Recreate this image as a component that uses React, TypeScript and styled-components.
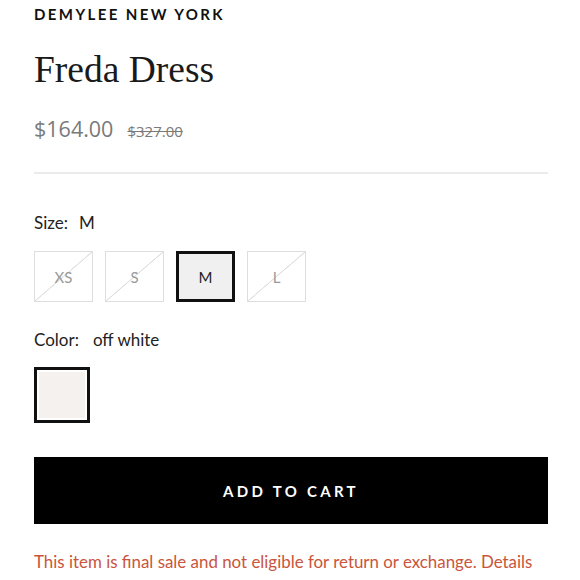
import React from "react";
import styled, {createGlobalStyle} from "styled-components";

const Global = createGlobalStyle`
  body {
    margin: 0;
    background: #fff;
    font-family: Lato, "Open Sans", sans-serif;
  }
`;

const Page = styled.main`
  width: 580px;
  box-sizing: border-box;
  padding: 4px 33px 0 34px;
  display: flex;
  flex-direction: column;
`;

const Brand = styled.div`
  font-family: Lato, sans-serif;
  font-weight: 700;
  font-size: 15px;
  letter-spacing: 2.4px;
  color: #111;
  line-height: 20px;
`;

const Title = styled.h1`
  font-family: "Liberation Serif", "DejaVu Serif", serif;
  font-weight: 400;
  font-size: 37.5px;
  color: #1a1a1a;
  margin: 25px 0 0;
  line-height: 42px;
`;

const Prices = styled.div`
  display: flex;
  align-items: baseline;
  gap: 14px;
  margin-top: 23px;
`;

const Price = styled.span`
  font-family: "Open Sans", sans-serif;
  font-size: 21.5px;
  color: #7a7a7a;
`;

const OldPrice = styled.s`
  font-family: "Open Sans", sans-serif;
  font-size: 15px;
  color: #7a7a7a;
`;

const Divider = styled.hr`
  border: none;
  height: 2px;
  background: #ebebeb;
  margin: 29px 0 0;
  width: 514px;
`;

const Label = styled.div<{$top: number; $gap: number}>`
  font-size: 17px;
  color: #222;
  margin-top: ${p => p.$top}px;
  display: flex;
  gap: ${p => p.$gap}px;
`;

const Sizes = styled.div`
  display: flex;
  gap: 12px;
  margin-top: 18px;
`;

const SizeBox = styled.div<{$active?: boolean}>`
  box-sizing: border-box;
  width: 59px;
  height: 51px;
  display: flex;
  align-items: center;
  justify-content: center;
  font-size: 15px;
  ${p => p.$active
    ? `border: 3px solid #111; background: #f0f0f0; color: #222;`
    : `border: 1px solid #dedede; color: #9a9a9a;
       background: linear-gradient(to bottom right, transparent calc(50% - 0.7px), #dcdcdc calc(50% - 0.2px), #dcdcdc calc(50% + 0.2px), transparent calc(50% + 0.7px));`}
`;

const Swatch = styled.div`
  box-sizing: border-box;
  width: 56px;
  height: 56px;
  border: 3px solid #111;
  padding: 2px;
  margin-top: 17px;
  & > div {
    width: 100%;
    height: 100%;
    background: #f4f1ef;
  }
`;

const CartButton = styled.button`
  margin-top: 34px;
  width: 514px;
  height: 67px;
  background: #000;
  color: #fff;
  border: none;
  font-family: Lato, sans-serif;
  font-weight: 700;
  font-size: 15px;
  letter-spacing: 3.3px;
`;

const Notice = styled.p`
  margin: 27px 0 0;
  font-size: 16.9px;
  color: #c9553c;
`;

const sizes = ["XS", "S", "M", "L"];

export default function App() {
    return (
        <Page>
            <Global/>
            <Brand>DEMYLEE NEW YORK</Brand>
            <Title>Freda Dress</Title>
            <Prices>
                <Price>$164.00</Price>
                <OldPrice>$327.00</OldPrice>
            </Prices>
            <Divider/>
            <Label $top={38} $gap={11}><span>Size:</span><span>M</span></Label>
            <Sizes>
                {sizes.map(s => (
                    <SizeBox key={s} $active={s === "M"}>{s}</SizeBox>
                ))}
            </Sizes>
            <Label $top={27} $gap={14}><span>Color:</span><span>off white</span></Label>
            <Swatch><div/></Swatch>
            <CartButton>ADD TO CART</CartButton>
            <Notice>This item is final sale and not eligible for return or exchange. Details</Notice>
        </Page>
    );
}
